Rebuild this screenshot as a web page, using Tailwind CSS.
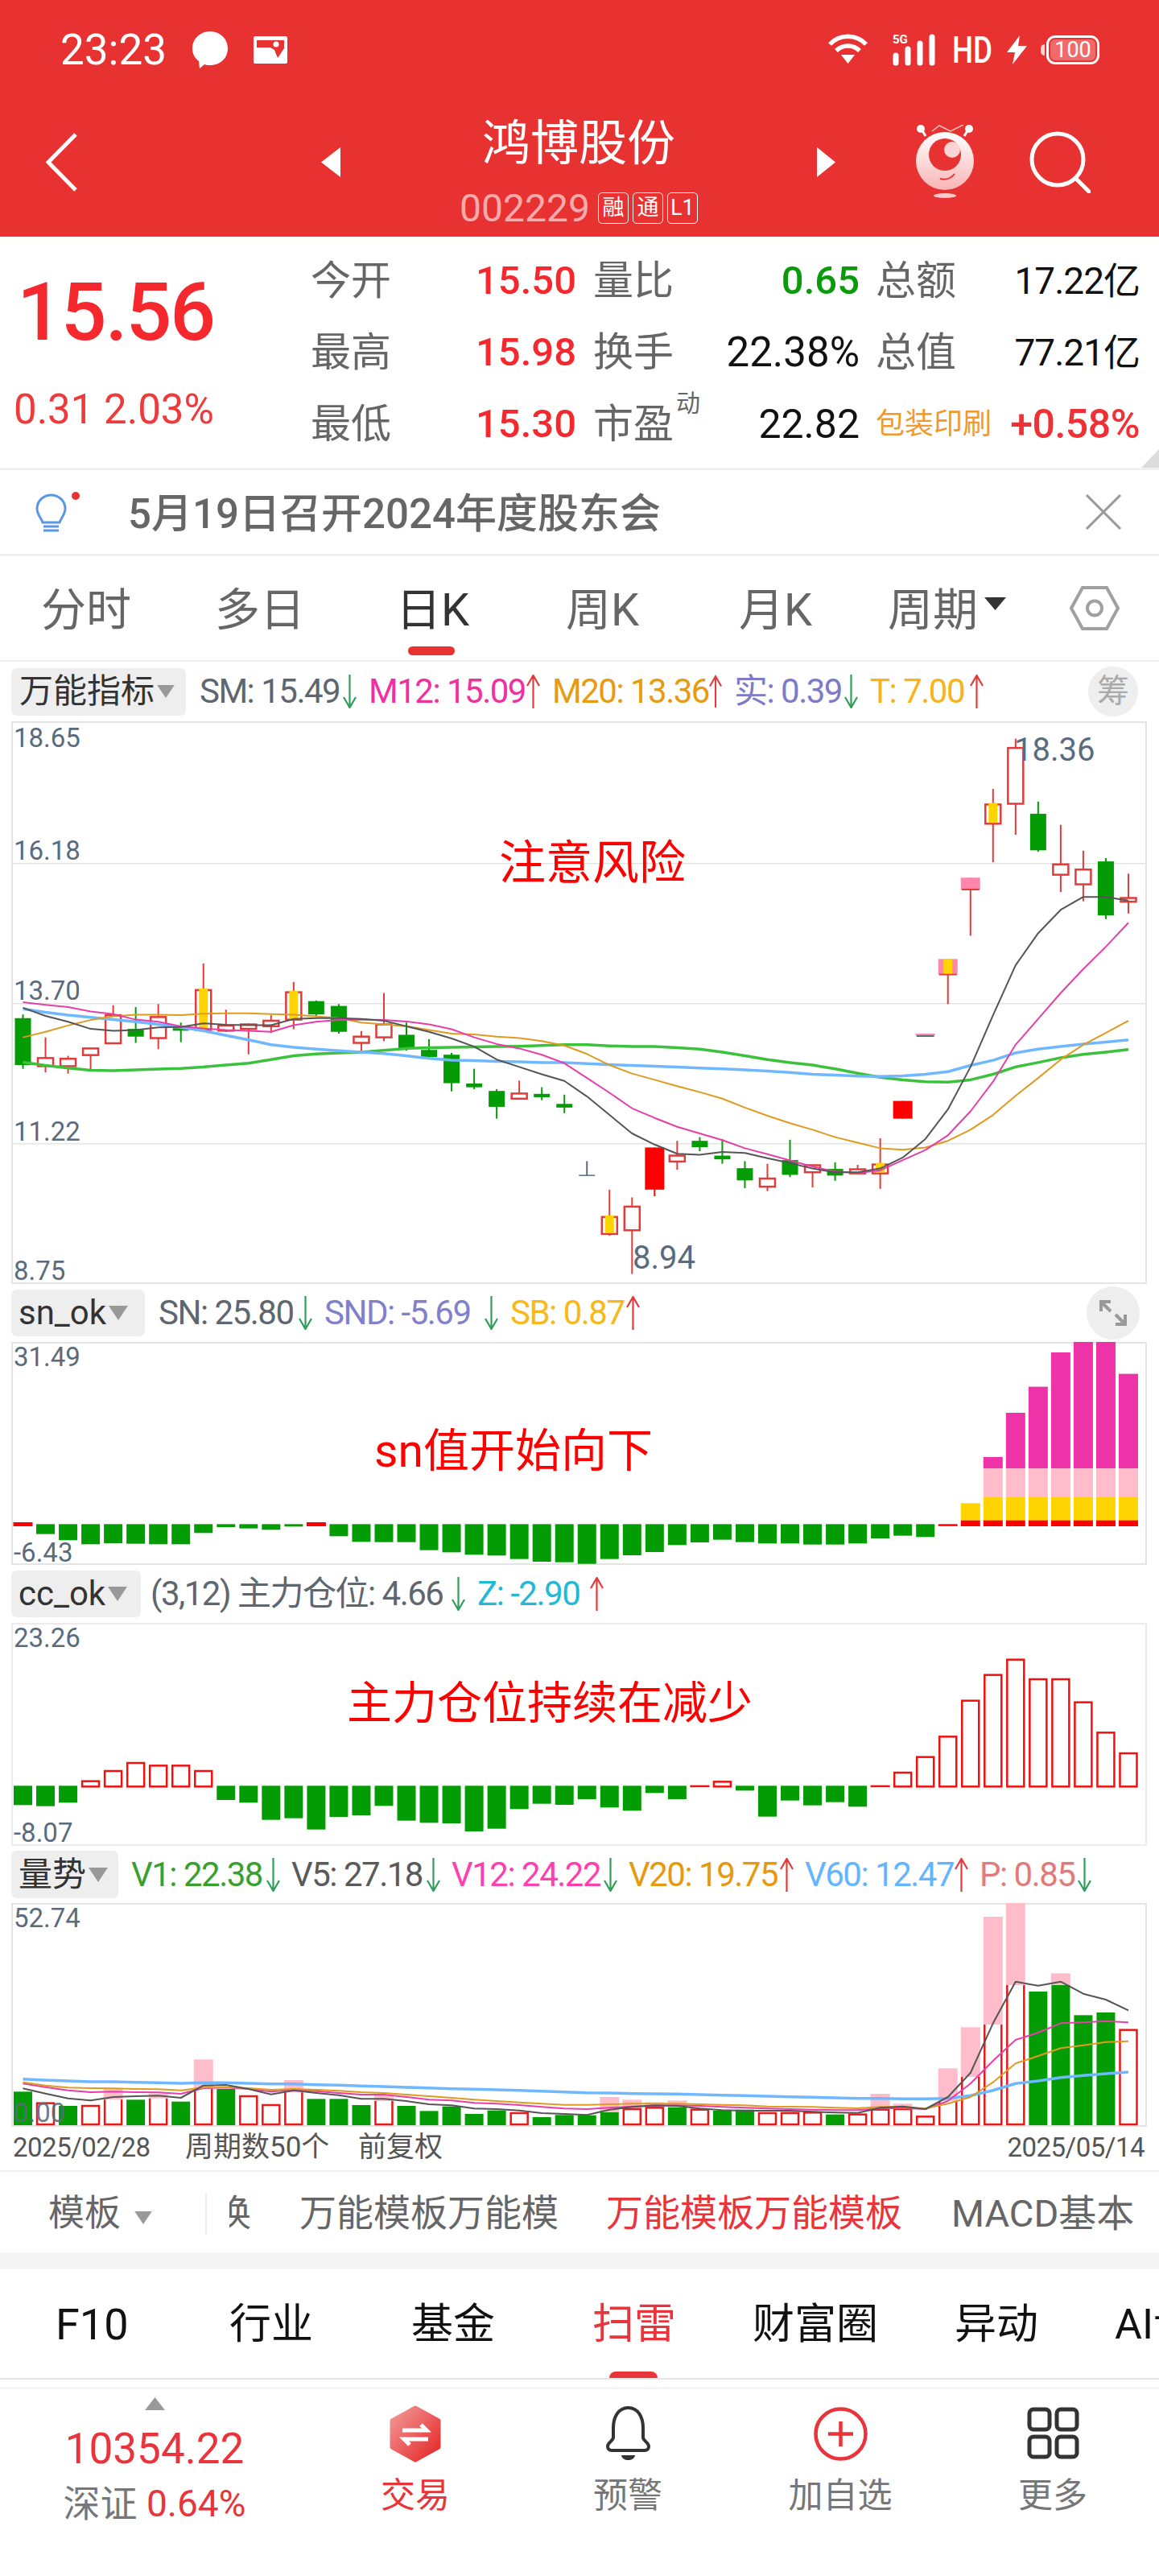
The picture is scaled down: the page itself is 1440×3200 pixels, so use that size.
<!DOCTYPE html>
<html lang="zh-CN">
<head>
  <meta charset="UTF-8" />
  <title>鸿博股份</title>
  <script src="https://cdn.jsdelivr.net/npm/@tailwindcss/browser@4"></script>
</head>
<body class="bg-white w-[1440px] h-[3200px] overflow-hidden font-['Roboto','Noto_Sans_CJK_SC',sans-serif] text-[#333]">

  <svg class="hidden">
    <symbol id="down" viewBox="0 0 17 42"><path d="M8.5 0V40M1 28L8.5 41L16 28" fill="none" stroke="#2f9e5a" stroke-width="2.2"/></symbol>
    <symbol id="up" viewBox="0 0 17 42"><path d="M8.5 42V2M1 14L8.5 1L16 14" fill="none" stroke="#e23b3b" stroke-width="2.2"/></symbol>
    <symbol id="caret" viewBox="0 0 26 20"><path d="M1 1H25L13 19Z" fill="#999"/></symbol>
  </svg>

  <!-- Red header -->
  <header class="bg-[#e83232] h-[294px] text-white">
    <div class="h-[124px] flex items-center pl-[75px] pr-[74px]">
      <span class="text-[53px] leading-none">23:23</span>
      <svg class="ml-[31px] w-[46px] h-[46px]" viewBox="0 0 44 46"><path d="M22 0C34 0 44 9 44 21C44 33 35 42 22 42C19 42 18 42 15 41L9 46L8 37C3 33 0 28 0 21C0 9 10 0 22 0Z" fill="#fff"/></svg>
      <svg class="ml-[31px] w-[42px] h-[34px]" viewBox="0 0 42 34"><rect width="42" height="34" rx="2" fill="#fff"/><path d="M4 5H38V15L30 27L26 17L21 14H4Z" fill="#e83232"/><circle cx="28" cy="10" r="3.5" fill="#fff"/></svg>
      <svg class="ml-auto w-[51px] h-[40px]" viewBox="0 0 51 40" fill="none" stroke="#fff" stroke-width="5.500"><path d="M3 13C15 0 36 0 48 13"/><path d="M11 21C19 13 32 13 40 21"/><path d="M17 26H34L25.500 37Z" fill="#fff" stroke="none"/></svg>
      <div class="ml-[30px] w-[53px] h-[40px] relative">
        <span class="absolute left-0 -top-[1px] text-[15px] leading-[16px] font-bold">5G</span>
        <svg class="w-[53px] h-[40px]" viewBox="0 0 53 40"><g fill="none" stroke="#fff" stroke-width="7" stroke-linecap="round"><path d="M4 27V36"/><path d="M19 19V36"/><path d="M34 12V36"/><path d="M49 4V36"/></g></svg>
      </div>
      <span class="ml-[21px] text-[46px] leading-none font-medium w-[44px] scale-x-[0.8] origin-left">HD</span>
      <svg class="ml-[24px] w-[25px] h-[36px]" viewBox="0 0 25 36"><path d="M16 0L0 21H10L7 36L25 13H14Z" fill="#fff"/></svg>
      <div class="ml-[17px] flex items-center">
        <span class="w-[5px] h-[14px] bg-white/80 rounded-l-full mr-[2px]"></span>
        <div class="w-[66px] h-[36px] border-[3px] border-white rounded-[11px] p-[2px]">
          <div class="h-full bg-[#f06a6a] rounded-[6px] flex items-center justify-center text-[27px] leading-none">100</div>
        </div>
      </div>
    </div>
    <div class="h-[170px] flex items-start">
      <svg class="ml-[57px] mt-[41px] w-[39px] h-[73px]" viewBox="0 0 39 73"><path d="M37 2L3 36.500L37 71" fill="none" stroke="#fff" stroke-width="5"/></svg>
      <svg class="ml-[303px] mt-[59px] w-[24px] h-[37px]" viewBox="0 0 24 37"><path d="M24 0V37L0 18.500Z" fill="#fff"/></svg>
      <div class="w-[592px] mt-[25px] flex flex-col items-center">
        <div class="text-[60px] leading-[60px]">鸿博股份</div>
        <div class="mt-[30px] flex items-center gap-[5px]">
          <span class="text-[48px] leading-[39px] text-white/60 mr-[5px]">002229</span>
          <span class="w-[38px] h-[39px] border border-white rounded-[5px] flex items-center justify-center text-[27px]">融</span>
          <span class="w-[38px] h-[39px] border border-white rounded-[5px] flex items-center justify-center text-[27px]">通</span>
          <span class="w-[38px] h-[39px] border border-white rounded-[5px] flex items-center justify-center text-[27px]">L1</span>
        </div>
      </div>
      <svg class="mt-[59px] w-[23px] h-[37px]" viewBox="0 0 23 37"><path d="M0 0V37L23 18.500Z" fill="#fff"/></svg>
      <svg class="ml-[98px] mt-[31px] w-[76px] h-[95px]" viewBox="0 0 76 95">
        <defs><linearGradient id="egg" x1="0" y1="0" x2="0" y2="1"><stop offset="0" stop-color="#fff"/><stop offset="1" stop-color="#f9b4b4"/></linearGradient></defs>
        <path d="M14 14L8 4" stroke="#fff" stroke-width="3"/><path d="M62 14L68 4" stroke="#fff" stroke-width="3"/>
        <circle cx="8" cy="5" r="5" fill="#fff"/><circle cx="68" cy="5" r="5" fill="#fff"/>
        <path d="M22 8L31 1L45 8L61 0" fill="none" stroke="#f9c0c0" stroke-width="1.500"/>
        <circle cx="38" cy="45" r="36" fill="url(#egg)"/>
        <circle cx="38" cy="37" r="20" fill="#e83232"/><circle cx="47" cy="31" r="10" fill="#fbd4d4"/>
        <path d="M32 67C40 69 46 66 50 61" fill="none" stroke="#e83232" stroke-width="2"/>
        <ellipse cx="38" cy="88" rx="14" ry="3" fill="#fbcaca"/>
      </svg>
      <svg class="ml-[67px] mt-[38px] w-[76px] h-[78px]" viewBox="0 0 76 78" fill="none" stroke="#fff" stroke-width="5"><circle cx="35" cy="36" r="32"/><path d="M58 60L74 76" stroke-linecap="round"/></svg>
    </div>
  </header>

  <!-- Quote panel -->
  <section class="relative h-[290px] border-b-[3px] border-[#f0f0f0] flex">
    <div class="w-[386px] flex flex-col">
      <div class="mt-[56px] pl-[21px] text-[100px] leading-[76px] font-medium text-[#f5282d] tracking-[-2px]">15.56</div>
      <div class="mt-[65px] pl-[17px] text-[51px] leading-[36px] text-[#ee3a3a]">0.31 2.03%</div>
    </div>
    <div class="pt-[10px] grid grid-cols-[200px_130px_144px_208px_162px_186px] auto-rows-[89px] items-center text-[50px] leading-none whitespace-nowrap">
      <span class="text-[#666]">今开</span><span class="text-right text-[49px] font-medium text-[#f5282d]">15.50</span><span class="pl-[21px] text-[#666]">量比</span><span class="text-right text-[49px] font-medium text-[#0a9a0a]">0.65</span><span class="pl-[20px] text-[#666]">总额</span><span class="text-right text-[#111] text-[46px] tracking-[-1px]">17.22亿</span>
      <span class="text-[#666]">最高</span><span class="text-right text-[49px] font-medium text-[#f5282d]">15.98</span><span class="pl-[21px] text-[#666]">换手</span><span class="text-right text-[#111] text-[51px]">22.38%</span><span class="pl-[20px] text-[#666]">总值</span><span class="text-right text-[#111] text-[46px] tracking-[-1px]">77.21亿</span>
      <span class="text-[#666]">最低</span><span class="text-right text-[49px] font-medium text-[#f5282d]">15.30</span><span class="pl-[21px] text-[#666] relative">市盈<span class="absolute left-[124px] -top-[16px] text-[30px]">动</span></span><span class="text-right text-[#111]">22.82</span><span class="pl-[20px] text-[#f09a2a] text-[36px]">包装印刷</span><span class="text-right text-[#f03035] text-[50px] font-medium tracking-[-0.5px]">+0.58%</span>
    </div>
    <svg class="absolute right-0 bottom-0 w-[22px] h-[23px]" viewBox="0 0 22 23"><path d="M22 0V23H0Z" fill="#dcdcdc"/></svg>
  </section>

  <!-- Notice -->
  <section class="h-[107px] border-b-[3px] border-[#f0f0f0] flex items-center relative">
    <svg class="ml-[44px] w-[58px] h-[51px]" viewBox="0 0 58 51" fill="none" stroke="#5a96e8" stroke-width="3"><path d="M19.500 4C9 4 2 12 2 21C2 28 7 32 9 38H30C32 32 37 28 37 21C37 12 30 4 19.500 4Z"/><path d="M10 43H29"/><path d="M10 48H29"/><circle cx="50" cy="5" r="5" fill="#e83232" stroke="none"/></svg>
    <span class="ml-[57px] mt-[4px] text-[51px] leading-none font-medium text-[#666]">5月19日召开2024年度股东会</span>
    <svg class="ml-auto mr-[46px] w-[46px] h-[44px]" viewBox="0 0 46 44" fill="none" stroke="#999" stroke-width="3"><path d="M2 1L44 43"/><path d="M44 1L2 43"/></svg>
  </section>

  <!-- Period tabs -->
  <nav class="relative h-[131px] border-b-[2px] border-[#f0f0f0] flex items-center pl-[51px] text-[56px] leading-none text-[#666]">
    <span class="w-[216px] mt-[4px]">分时</span>
    <span class="w-[225px] mt-[4px]">多日</span>
    <span class="w-[211px] mt-[4px] text-[#333]">日K</span>
    <span class="w-[215px] mt-[4px]">周K</span>
    <span class="w-[185px] mt-[4px]">月K</span>
    <span class="w-[120px] mt-[4px]">周期</span>
    <svg class="w-[27px] h-[16px] mb-[12px]" viewBox="0 0 27 16"><path d="M0 0H27L13.500 16Z" fill="#333"/></svg>
    <svg class="ml-[79px] w-[62px] h-[57px]" viewBox="0 0 62 57" fill="none" stroke="#a0a0a0" stroke-width="4"><path d="M16 3H46L60 28.500L46 54H16L2 28.500Z"/><circle cx="31" cy="28.500" r="9"/></svg>
    <span class="absolute left-[507px] top-[112px] w-[58px] h-[11px] rounded-full bg-[#e83232]"></span>
  </nav>

  <!-- Legend: main chart -->
  <div class="relative h-[74px] pl-[14px] flex items-center text-[42px] leading-none tracking-[-1.5px] whitespace-nowrap">
    <div class="w-[217px] h-[59px] rounded-[7px] bg-[#eee] flex items-center pl-[10px] text-[42px] tracking-normal text-[#333] shrink-0">万能指标<svg class="ml-[2px] w-[24px] h-[18px]"><use href="#caret"/></svg></div>
    <div class="ml-[17px] flex gap-[15px]">
      <div class="w-[195px] flex justify-between items-center text-[#5e6670]"><span>SM: 15.49</span><svg class="w-[17px] h-[42px]"><use href="#down"/></svg></div>
      <div class="w-[213px] flex justify-between items-center text-[#f0309f]"><span>M12: 15.09</span><svg class="w-[17px] h-[42px]"><use href="#up"/></svg></div>
      <div class="w-[211px] flex justify-between items-center text-[#e89a10]"><span>M20: 13.36</span><svg class="w-[17px] h-[42px]"><use href="#up"/></svg></div>
      <div class="w-[154px] flex justify-between items-center text-[#7d7bc9]"><span>实: 0.39</span><svg class="w-[17px] h-[42px]"><use href="#down"/></svg></div>
      <div class="w-[141px] flex justify-between items-center text-[#f8b31a]"><span>T: 7.00</span><svg class="w-[17px] h-[42px]"><use href="#up"/></svg></div>
    </div>
    <span class="ml-auto mr-[26px] w-[62px] h-[62px] rounded-full bg-[#eee] text-[#aaa] flex items-center justify-center text-[40px] tracking-normal">筹</span>
  </div>

  <!-- Main chart -->
  <div class="relative h-[699px]">
    <svg id="chart1" class="block w-[1440px] h-[699px]" viewBox="0 896 1440 699"></svg>
    <span class="absolute left-[17px] top-[9px] text-[33px] leading-[24px] text-[#5a6b7d]">18.65</span>
    <span class="absolute left-[17px] top-[149px] text-[33px] leading-[24px] text-[#5a6b7d]">16.18</span>
    <span class="absolute left-[17px] top-[323px] text-[33px] leading-[24px] text-[#5a6b7d]">13.70</span>
    <span class="absolute left-[17px] top-[498px] text-[33px] leading-[24px] text-[#5a6b7d]">11.22</span>
    <span class="absolute left-[17px] top-[671px] text-[33px] leading-[24px] text-[#5a6b7d]">8.75</span>
    <span class="absolute left-[1260px] top-[21px] text-[40px] leading-[30px] text-[#5a6b7d]">18.36</span>
    <span class="absolute left-[786px] top-[652px] text-[40px] leading-[30px] text-[#5a6b7d]">8.94</span>
    <span class="absolute left-[620px] top-[144px] text-[58px] leading-[64px] text-[#f00]">注意风险</span>
  </div>

  <!-- Legend: sn_ok -->
  <div class="h-[72px] pl-[14px] flex items-center text-[42px] leading-none tracking-[-1.5px] whitespace-nowrap">
    <div class="w-[166px] h-[58px] rounded-[7px] bg-[#eee] flex items-center pl-[9px] text-[42px] tracking-normal text-[#333] shrink-0">sn_ok<svg class="ml-[2px] w-[26px] h-[20px]"><use href="#caret"/></svg></div>
    <div class="ml-[17px] flex gap-[15px]">
      <div class="w-[191px] flex justify-between items-center text-[#5e6670]"><span>SN: 25.80</span><svg class="w-[17px] h-[42px]"><use href="#down"/></svg></div>
      <div class="w-[216px] flex justify-between items-center text-[#8080cc]"><span>SND: -5.69</span><svg class="w-[17px] h-[42px]"><use href="#down"/></svg></div>
      <div class="w-[161px] flex justify-between items-center text-[#f8b818]"><span>SB: 0.87</span><svg class="w-[17px] h-[42px]"><use href="#up"/></svg></div>
    </div>
    <span class="ml-auto mr-[24px] w-[66px] h-[66px] rounded-full bg-[#eee] flex items-center justify-center">
      <svg class="w-[36px] h-[34px]" viewBox="0 0 36 34" fill="none" stroke="#999" stroke-width="4"><path d="M3 15V3H15"/><path d="M3 3L15 15"/><path d="M33 19V31H21"/><path d="M33 31L21 19"/></svg>
    </span>
  </div>

  <!-- sn_ok chart -->
  <div class="relative h-[277px]">
    <svg id="chart2" class="block w-[1440px] h-[277px]" viewBox="0 1667 1440 277"></svg>
    <span class="absolute left-[17px] top-[7px] text-[33px] leading-[24px] text-[#5a6b7d]">31.49</span>
    <span class="absolute left-[17px] top-[250px] text-[33px] leading-[24px] text-[#5a6b7d]">-6.43</span>
    <span class="absolute left-[465px] top-[104px] text-[57px] leading-[64px] text-[#f00]">sn值开始向下</span>
  </div>

  <!-- Legend: cc_ok -->
  <div class="h-[72px] pl-[14px] flex items-center text-[42px] leading-none tracking-[-1.5px] whitespace-nowrap">
    <div class="w-[161px] h-[58px] rounded-[7px] bg-[#eee] flex items-center pl-[9px] text-[42px] tracking-normal text-[#333] shrink-0">cc_ok<svg class="ml-[2px] w-[26px] h-[20px]"><use href="#caret"/></svg></div>
    <div class="ml-[12px] flex gap-[15px]">
      <div class="w-[391px] flex justify-between items-center text-[#5e6670]"><span>(3,12) 主力仓位: 4.66</span><svg class="w-[17px] h-[42px]"><use href="#down"/></svg></div>
      <div class="w-[157px] flex justify-between items-center text-[#22b8d8]"><span>Z: -2.90</span><svg class="w-[17px] h-[42px]"><use href="#up"/></svg></div>
    </div>
  </div>

  <!-- cc_ok chart -->
  <div class="relative h-[277px]">
    <svg id="chart3" class="block w-[1440px] h-[277px]" viewBox="0 2016 1440 277"></svg>
    <span class="absolute left-[17px] top-[7px] text-[33px] leading-[24px] text-[#5a6b7d]">23.26</span>
    <span class="absolute left-[17px] top-[249px] text-[33px] leading-[24px] text-[#5a6b7d]">-8.07</span>
    <span class="absolute left-[431px] top-[68px] text-[56px] leading-[64px] text-[#f00]">主力仓位持续在减少</span>
  </div>

  <!-- Legend: volume -->
  <div class="h-[71px] pl-[14px] flex items-center text-[42px] leading-none tracking-[-1.5px] whitespace-nowrap">
    <div class="w-[133px] h-[59px] rounded-[7px] bg-[#eee] flex items-center pl-[9px] text-[42px] tracking-normal text-[#333] shrink-0">量势<svg class="ml-[2px] w-[26px] h-[20px]"><use href="#caret"/></svg></div>
    <div class="ml-[16px] flex gap-[14px]">
      <div class="w-[185px] flex justify-between items-center text-[#38a02d]"><span>V1: 22.38</span><svg class="w-[17px] h-[42px]"><use href="#down"/></svg></div>
      <div class="w-[185px] flex justify-between items-center text-[#5a5a5a]"><span>V5: 27.18</span><svg class="w-[17px] h-[42px]"><use href="#down"/></svg></div>
      <div class="w-[206px] flex justify-between items-center text-[#ff3fb0]"><span>V12: 24.22</span><svg class="w-[17px] h-[42px]"><use href="#down"/></svg></div>
      <div class="w-[205px] flex justify-between items-center text-[#e8980c]"><span>V20: 19.75</span><svg class="w-[17px] h-[42px]"><use href="#up"/></svg></div>
      <div class="w-[203px] flex justify-between items-center text-[#62b5ff]"><span>V60: 12.47</span><svg class="w-[17px] h-[42px]"><use href="#up"/></svg></div>
      <div class="w-[139px] flex justify-between items-center text-[#e27a7a]"><span>P: 0.85</span><svg class="w-[17px] h-[42px]"><use href="#down"/></svg></div>
    </div>
  </div>

  <!-- Volume chart -->
  <div class="relative h-[278px]">
    <svg id="chart4" class="block w-[1440px] h-[278px]" viewBox="0 2364 1440 278"></svg>
    <span class="absolute left-[17px] top-[7px] text-[33px] leading-[24px] text-[#5a6b7d]">52.74</span>
    <span class="absolute left-[17px] top-[249px] text-[33px] leading-[24px] text-[#5a6b7d]/90">0.00</span>
  </div>

  <!-- Axis row -->
  <div class="h-[56px] border-b-[2px] border-[#f0f0f0] pl-[16px] pr-[18px] pb-[4px] flex items-center text-[35px] leading-none text-[#555]">
    <span class="w-[214px] text-[33px] tracking-[-0.5px]">2025/02/28</span>
    <span class="w-[215px]">周期数50个</span>
    <span>前复权</span>
    <span class="ml-auto text-[33px] tracking-[-0.5px]">2025/05/14</span>
  </div>

  <!-- Template row -->
  <div class="h-[100px] pt-[2px] flex items-center text-[46px] leading-none text-[#666] whitespace-nowrap">
    <span class="ml-[60px] w-[105px] text-[45px]">模板</span>
    <svg class="w-[26px] h-[18px] mt-[12px]" viewBox="0 0 26 20"><path d="M1 1H25L13 19Z" fill="#999"/></svg>
    <span class="ml-[64px] w-[2px] h-[53px] bg-[#eee]"></span>
    <span class="ml-[28px] w-[27px] overflow-hidden flex justify-end"><span class="shrink-0">换</span></span>
    <span class="ml-[60px] w-[381px]">万能模板万能模</span>
    <span class="w-[429px] text-[#e8343a]">万能模板万能模板</span>
    <span class="text-[47px]">MACD基本</span>
  </div>
  <div class="h-[21px] bg-[#f5f5f5]"></div>

  <!-- F10 tabs -->
  <nav class="relative h-[137px] border-b-[2px] border-[#e4e4e4] flex items-center pl-[69px] pt-[2px] text-[52px] leading-none text-[#111] whitespace-nowrap overflow-hidden">
    <span class="w-[216px] shrink-0 text-[54px]">F10</span>
    <span class="w-[226px] shrink-0">行业</span>
    <span class="w-[225px] shrink-0">基金</span>
    <span class="w-[199px] shrink-0 text-[#e8343a]">扫雷</span>
    <span class="w-[251px] shrink-0">财富圈</span>
    <span class="w-[199px] shrink-0">异动</span>
    <span class="shrink-0">AI诊股</span>
    <span class="absolute left-[757px] bottom-0 w-[60px] h-[8px] rounded-t-full bg-[#e8343a]"></span>
  </nav>
  <div class="h-[9px]"></div>
  <div class="h-[3px] bg-[#f5f5f5]"></div>

  <!-- Bottom bar -->
  <footer class="flex h-[232px]">
    <div class="w-[384px] flex flex-col items-center">
      <svg class="mt-[10px] w-[25px] h-[16px]" viewBox="0 0 25 16"><path d="M12.500 0L25 16H0Z" fill="#999"/></svg>
      <div class="mt-[28px] text-[53px] leading-[40px] text-[#e8343a]">10354.22</div>
      <div class="mt-[26px] text-[46px] leading-[44px] text-[#777] whitespace-nowrap">深证 <span class="text-[#e8343a]">0.64%</span></div>
    </div>
    <div class="w-[264px] flex flex-col items-center">
      <svg class="mt-[20px] w-[64px] h-[71px]" viewBox="0 0 64 71">
        <defs><linearGradient id="hex" x1="0" y1="0" x2="1" y2="1"><stop offset="0" stop-color="#f49a9a"/><stop offset="1" stop-color="#e42424"/></linearGradient></defs>
        <path d="M32 3L61 19V52L32 68L3 52V19Z" fill="url(#hex)" stroke="url(#hex)" stroke-width="5" stroke-linejoin="round"/>
        <path d="M16 31H46L39 24" fill="none" stroke="#fff" stroke-width="5"/><path d="M48 42H18L25 49" fill="none" stroke="#fff" stroke-width="5"/>
      </svg>
      <span class="mt-[19px] text-[43px] leading-[44px] text-[#e8343a]">交易</span>
    </div>
    <div class="w-[264px] flex flex-col items-center">
      <svg class="mt-[20px] w-[57px] h-[71px]" viewBox="0 0 57 71"><path d="M28.500 3C16 3 10 15 10 28V40C10 44 3 46 3 51C3 54 5 56 8 56H49C52 56 54 54 54 51C54 46 47 44 47 40V28C47 15 41 3 28.500 3Z" fill="none" stroke="#333" stroke-width="4"/><path d="M20 62H37C36 70 21 70 20 62Z" fill="#333"/></svg>
      <span class="mt-[19px] text-[43px] leading-[44px] text-[#777]">预警</span>
    </div>
    <div class="w-[264px] flex flex-col items-center">
      <svg class="mt-[20px] w-[71px] h-[71px]" viewBox="0 0 71 71" fill="none" stroke="#e8343a" stroke-width="4.500"><circle cx="35.500" cy="35.500" r="31"/><path d="M35.500 20V51"/><path d="M20 35.500H51"/></svg>
      <span class="mt-[19px] text-[43px] leading-[44px] text-[#777]">加自选</span>
    </div>
    <div class="w-[264px] flex flex-col items-center">
      <svg class="mt-[22px] w-[65px] h-[65px]" viewBox="0 0 65 65" fill="none" stroke="#333" stroke-width="5"><rect x="3" y="3" width="25" height="25" rx="5"/><rect x="37" y="3" width="25" height="25" rx="5"/><rect x="3" y="37" width="25" height="25" rx="5"/><rect x="37" y="37" width="25" height="25" rx="5"/></svg>
      <span class="mt-[23px] text-[43px] leading-[44px] text-[#777]">更多</span>
    </div>
  </footer>

  <script>
    const GREEN = "#049c04", RED = "#ee2f2f", PINK = "#ffbccb", YELLOW = "#ffd400";
    const X = i => 28.5 + 28.03 * i;

    function rect(x, y, w, h, fill, stroke) {
      return `<rect x="${x}" y="${y}" width="${w}" height="${h}" fill="${fill}"` + (stroke ? ` stroke="${stroke}" stroke-width="2.5"` : "") + "/>";
    }
    function frame(top, bottom, color) {
      return `<rect x="15" y="${top}" width="1409" height="${bottom - top}" fill="#fff" stroke="${color || "#e4e4e4"}" stroke-width="2"/>`;
    }
    function line(vals, Y, color, width) {
      const pts = vals.map((v, i) => X(i).toFixed(1) + "," + Y(v).toFixed(1)).join(" ");
      return `<polyline points="${pts}" fill="none" stroke="${color}" stroke-width="${width}" stroke-linejoin="round"/>`;
    }

    // main chart: values are read off the 2.178x crop
    const Y1 = z => 880 + z / 2.178;
    // [high, bodyTop, bodyBottom, low, kind]
    const candles = [
      [828,838,965,975,"g"],[890,946,968,985,"r"],[940,948,968,988,"r"],[920,920,938,976,"r"],[803,830,906,906,"r"],
      [808,867,888,905,"g"],[800,835,892,922,"r"],[850,865,872,903,"g"],[690,762,870,870,"y"],[815,858,872,875,"r"],
      [852,855,867,936,"r"],[830,845,860,878,"r"],[740,768,842,868,"y"],[790,792,828,835,"g"],[800,805,875,880,"g"],
      [873,888,905,928,"r"],[770,855,890,900,"r"],[850,883,920,926,"g"],[895,924,943,945,"g"],[932,937,1014,1036,"g"],
      [975,1015,1025,1030,"g"],[1030,1035,1078,1110,"g"],[1007,1042,1056,1056,"r"],[1025,1043,1052,1060,"g"],[1045,1070,1080,1095,"g"],
      [1225,1262,1264,1264,"t"],[1302,1376,1422,1427,"y"],[1323,1348,1412,1530,"r"],[1188,1188,1302,1320,"R"],[1170,1210,1226,1248,"r"],
      [1160,1170,1187,1198,"g"],[1165,1210,1220,1232,"g"],[1225,1244,1277,1298,"g"],[1232,1272,1294,1306,"r"],[1167,1222,1262,1268,"g"],
      [1236,1236,1255,1296,"r"],[1228,1246,1264,1278,"g"],[1235,1247,1258,1260,"r"],[1163,1234,1258,1300,"y"],[1062,1062,1110,1110,"R"],
      [880,880,888,888,"d"],[678,678,720,800,"q"],[458,458,490,615,"p"],[218,260,312,416,"y"],[82,107,258,342,"r"],
      [252,285,384,388,"g"],[315,422,450,497,"r"],[385,436,476,522,"r"],[405,414,560,570,"g"],[447,513,523,555,"r"]
    ];
    let s1 = frame(897, 1594);
    [1072, 1246, 1420].forEach(y => { s1 += `<rect x="15" y="${y}" width="1409" height="1.5" fill="#e4e4e4"/>`; });
    candles.forEach((c, i) => {
      const x = X(i), k = c[4];
      const [hi, top, bot, lo] = [Y1(c[0]), Y1(c[1]), Y1(c[2]), Y1(c[3])];
      const wick = { g: GREEN, R: "#f00", t: "#5a6b7d", d: "#5a6b7d" }[k] || "#e23b3b";
      if (k !== "d") s1 += `<path d="M${x} ${hi}V${lo}" stroke="${wick}" stroke-width="2"/>`;
      if (k === "g") s1 += rect(x - 10, top, 20, bot - top, GREEN);
      if (k === "r") s1 += rect(x - 9.5, top, 19, bot - top, "#fff", "#e23b3b");
      if (k === "y") { s1 += rect(x - 9.5, top, 19, bot - top, "#fff", "#e23b3b"); s1 += rect(x - 5.5, top - 2, 11, bot - top + 1, YELLOW); }
      if (k === "R") s1 += rect(x - 12, top, 24, bot - top, "#f00");
      if (k === "t") s1 += rect(x - 10, bot - 1, 20, 1.5, "#5a6b7d");
      if (k === "d") { s1 += rect(x - 12, top, 24, 2, "#ff86ab"); s1 += rect(x - 11, top + 2, 22, 2, "#5a6b7d"); }
      if (k === "p" || k === "q") { s1 += rect(x - 12, top, 24, bot - top, "#ff86ab"); s1 += rect(x - 11, bot - 1, 22, 2, "#e23b3b"); }
      if (k === "q") s1 += rect(x - 5.5, top, 11, bot - top - 1, YELLOW);
    });
    const ma1 = {
      green: [957,966,973,979,980,978,976,974,970,965,960,950,940,935,932,930,925,920,918,917,916,915,914,912,910,910,913,915,915,918,922,930,940,950,958,965,975,987,998,1005,1010,1011,1005,990,970,958,945,936,930,923],
      blue: [813,822,830,836,842,848,855,863,872,885,897,910,917,922,926,930,934,940,947,952,953,955,956,958,958,961,964,966,968,970,973,975,978,981,985,990,992,995,996,994,990,983,966,952,932,922,915,908,903,897],
      orange: [890,875,858,843,833,829,829,830,826,825,825,827,829,833,838,850,855,860,870,880,882,888,892,900,912,935,965,988,1005,1022,1038,1056,1080,1102,1122,1140,1160,1175,1190,1194,1188,1170,1140,1100,1048,1000,950,910,878,845],
      pink: [795,802,808,820,827,842,848,860,866,870,872,875,857,848,843,842,843,847,855,868,890,908,920,937,960,1000,1040,1082,1108,1132,1150,1168,1190,1206,1223,1240,1253,1257,1250,1222,1195,1155,1090,1010,910,840,770,705,645,580],
      black: [810,832,848,867,872,870,863,862,852,856,857,857,840,838,838,840,845,860,875,893,915,950,970,990,1008,1050,1100,1150,1180,1205,1208,1200,1203,1217,1230,1245,1255,1255,1245,1215,1165,1085,970,830,695,608,545,510,510,520]
    };
    s1 += line(ma1.green, Y1, "#3cc13c", 3.5) + line(ma1.blue, Y1, "#6fb8ff", 3.5) + line(ma1.orange, Y1, "#e09a1f", 2) + line(ma1.pink, Y1, "#e63fa8", 2) + line(ma1.black, Y1, "#555", 2);
    document.getElementById("chart1").innerHTML = s1;

    // sn_ok: bottom edge of each green bar, 0 means a thin red dash
    const Y2 = z => 1600 + z / 3;
    const sn = [0,917,940,955,951,953,955,955,913,891,896,901,889,0,925,946,947,947,977,985,994,997,1010,1020,1022,1028,1010,996,984,958,948,938,947,952,952,956,956,952,933,923,928,0];
    const snTop = { 43: 630, 44: 465, 45: 368, 46: 240, 47: 200, 48: 200, 49: 320 };
    let s2 = frame(1668, 1943);
    sn.forEach((z, i) => {
      if (z) s2 += rect(X(i) - 11.5, Y2(880), 23, (z - 880) / 3, GREEN);
      else s2 += rect(X(i) - 12, Y2(i === 41 ? 880 : 873), 24, i === 41 ? 2.5 : 5, "#f00");
    });
    s2 += rect(X(42) - 12, Y2(802), 24, (866 - 802) / 3, YELLOW) + rect(X(42) - 12, Y2(866), 24, 22 / 3, "#f00");
    Object.keys(snTop).forEach(k => {
      const x = X(+k) - 12;
      s2 += rect(x, Y2(snTop[k]), 24, (672 - snTop[k]) / 3, "#ee32a8");
      s2 += rect(x, Y2(672), 24, 36, PINK) + rect(x, Y2(780), 24, 29, YELLOW) + rect(x, Y2(866), 24, 22 / 3, "#f00");
    });
    document.getElementById("chart2").innerHTML = s2;

    // cc_ok: positive numbers are red hollow bars (top edge), negative are green (bottom edge)
    const Y3 = z => 1950 + z / 3;
    const cc = [-877,-881,-868,788,750,720,730,730,750,-858,-868,-932,-926,-968,-921,-915,-880,-935,-943,-945,-975,-965,-892,-872,-876,-855,-886,-898,-832,-855,800,790,-823,-920,-860,-878,-866,-883,803,756,698,622,488,392,335,408,408,494,607,684];
    let s3 = frame(2017, 2292, "#ececec");
    cc.forEach((z, i) => {
      if (z < 0) s3 += rect(X(i) - 11.5, Y3(805), 23, (-z - 805) / 3, GREEN);
      else if (i === 30 || i === 38) s3 += rect(X(i) - 12, Y3(803), 24, 2.5, "#f01010");
      else s3 += rect(X(i) - 10.5, Y3(z), 21, (808 - z) / 3, "#fff", "#f01010");
    });
    document.getElementById("chart3").innerHTML = s3;

    // volume: [kind, top of bar, top of pink block]
    const Y4 = z => 2280 + z / 3;
    const vol = [["g",955],["r",998],["g",1008],["r",1008],["r",985,945],["g",985],["r",980,962],["g",992],["r",945,835],["g",945],
      ["r",972],["r",1005],["r",958,912],["g",982],["g",982],["g",1005],["r",990,968],["g",1008],["g",1027],["g",1010],
      ["g",1038],["g",1025],["r",1035],["g",1050],["g",1042],["g",1043],["g",1032,975],["r",1020,985],["r",1015,994],["g",1014,988],
      ["r",1022],["g",1026],["g",1022],["r",1035],["r",1035,1025],["r",1033],["g",1040],["r",1040],["r",1022,963],["r",1020,1000],
      ["r",1048],["r",990,868],["r",900,715],["r",705,303],["r",558,252],["g",582],["g",558,514],["g",670],["g",660],["r",725]];
    let s4 = frame(2365, 2641);
    vol.forEach((v, i) => {
      const x = X(i), bottom = Y4(1080), top = Y4(v[1]);
      if (v[2]) s4 += rect(x - 12, Y4(v[2]), 24, top - Y4(v[2]), PINK);
      if (v[0] === "g") s4 += rect(x - 11.5, top, 23, bottom - top, GREEN);
      else if (v[2] && v[1] < 1000) s4 += `<path d="M${x - 10.5} ${top}V${bottom - 1}H${x + 10.5}V${top}" fill="none" stroke="#e81818" stroke-width="2.5"/>`;
      else s4 += rect(x - 10.5, top, 21, bottom - top - 1, "none", "#e81818");
    });
    const ma4 = {
      blue: [908,912,915,918,918,920,922,924,922,922,924,926,926,929,931,934,936,939,941,944,946,948,950,953,956,959,960,962,963,964,966,968,970,972,974,976,978,980,980,982,982,980,970,950,925,915,902,895,888,882],
      orange: [920,932,940,942,943,945,946,950,940,938,942,948,945,948,952,957,960,966,972,978,985,990,995,1000,1004,1004,1002,1000,1000,1000,1002,1004,1006,1010,1011,1012,1015,1017,1012,1012,1018,1000,975,920,850,822,793,782,770,767],
      pink: [925,938,950,957,955,957,958,963,942,940,945,955,948,953,960,966,966,975,985,988,997,1000,1005,1012,1018,1020,1015,1010,1008,1006,1008,1012,1015,1018,1020,1022,1024,1024,1018,1016,1020,990,925,840,762,735,700,697,692,697],
      black: [943,962,980,988,975,972,970,978,932,930,945,965,950,960,968,982,982,990,1002,1006,1018,1020,1025,1035,1038,1042,1022,1012,1006,1008,1018,1024,1026,1026,1026,1030,1033,1034,1015,1010,1020,975,885,700,545,560,545,590,612,652]
    };
    s4 += line(ma4.blue, Y4, "#6fb8ff", 3.5) + line(ma4.pink, Y4, "#e63fa8", 2) + line(ma4.orange, Y4, "#e09a1f", 2) + line(ma4.black, Y4, "#555", 2);
    document.getElementById("chart4").innerHTML = s4;
  </script>
</body>
</html>
